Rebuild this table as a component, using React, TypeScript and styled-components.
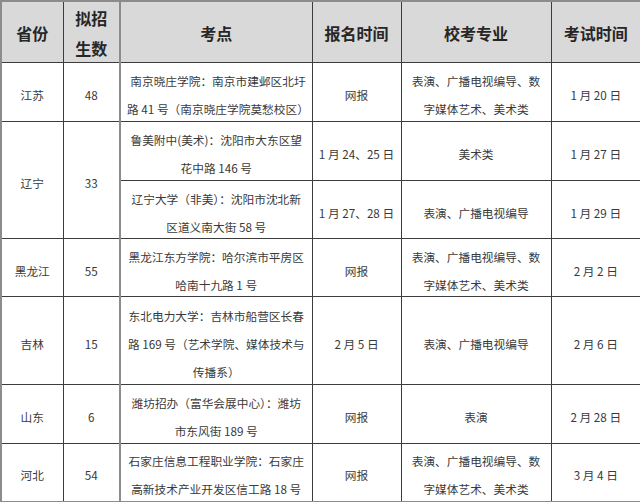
import React from "react";
import styled, { createGlobalStyle } from "styled-components";

const GlobalStyle = createGlobalStyle`
  html, body {
    margin: 0;
    padding: 0;
    background: #ffffff;
  }
  body {
    font-family: "Noto Sans CJK SC", "Liberation Sans", sans-serif;
  }
`;

const Page = styled.div`
  width: 640px;
`;

const Table = styled.table`
  border-collapse: collapse;
  table-layout: fixed;
  width: 640px;
  border: 2px solid #8c8c8c;
  color: #3a3a3a;
`;

const HeadCell = styled.th<{ $thick?: boolean }>`
  background: #d9d9d9;
  height: 58px;
  padding: 0;
  font-size: 16px;
  font-weight: 700;
  line-height: 30px;
  color: #262626;
  text-align: center;
  vertical-align: middle;
  border: 1px solid #3c3c3c;
  border-right: ${(p) => (p.$thick ? "2px solid #8c8c8c" : "1px solid #3c3c3c")};
`;

const Row = styled.tr<{ $h: number }>`
  height: ${(p) => p.$h}px;
`;

const Cell = styled.td<{ $thick?: boolean }>`
  padding: 0 6px;
  font-size: 11.7px;
  line-height: 28px;
  text-align: center;
  vertical-align: middle;
  white-space: nowrap;
  border: 1px solid #3c3c3c;
  border-right: ${(p) => (p.$thick ? "2px solid #8c8c8c" : "1px solid #3c3c3c")};
`;

/* the source font sits lower in its line box than Noto does */
const Text = styled.span<{ $shift?: number }>`
  display: inline-block;
  transform: translateY(${(p) => p.$shift ?? 3}px);
`;

type Site = { place: React.ReactNode; signup: string; major: React.ReactNode; exam: string; h: number };
type Prov = { name: string; count: string; sites: Site[] };

const data: Prov[] = [
  {
    name: "江苏",
    count: "48",
    sites: [
      {
        place: (
          <>
            南京晓庄学院：南京市建邺区北圩
            <br />
            路 41 号（南京晓庄学院莫愁校区）
          </>
        ),
        signup: "网报",
        major: (
          <>
            表演、广播电视编导、数
            <br />
            字媒体艺术、美术类
          </>
        ),
        exam: "1 月 20 日",
        h: 59,
      },
    ],
  },
  {
    name: "辽宁",
    count: "33",
    sites: [
      {
        place: (
          <>
            鲁美附中(美术)：沈阳市大东区望
            <br />
            花中路 146 号
          </>
        ),
        signup: "1 月 24、25 日",
        major: "美术类",
        exam: "1 月 27 日",
        h: 59,
      },
      {
        place: (
          <>
            辽宁大学（非美）：沈阳市沈北新
            <br />
            区道义南大街 58 号
          </>
        ),
        signup: "1 月 27、28 日",
        major: "表演、广播电视编导",
        exam: "1 月 29 日",
        h: 58,
      },
    ],
  },
  {
    name: "黑龙江",
    count: "55",
    sites: [
      {
        place: (
          <>
            黑龙江东方学院：哈尔滨市平房区
            <br />
            哈南十九路 1 号
          </>
        ),
        signup: "网报",
        major: (
          <>
            表演、广播电视编导、数
            <br />
            字媒体艺术、美术类
          </>
        ),
        exam: "2 月 2 日",
        h: 58,
      },
    ],
  },
  {
    name: "吉林",
    count: "15",
    sites: [
      {
        place: (
          <>
            东北电力大学：吉林市船营区长春
            <br />
            路 169 号（艺术学院、媒体技术与
            <br />
            传播系）
          </>
        ),
        signup: "2 月 5 日",
        major: "表演、广播电视编导",
        exam: "2 月 6 日",
        h: 88,
      },
    ],
  },
  {
    name: "山东",
    count: "6",
    sites: [
      {
        place: (
          <>
            潍坊招办（富华会展中心）：潍坊
            <br />
            市东风街 189 号
          </>
        ),
        signup: "网报",
        major: "表演",
        exam: "2 月 28 日",
        h: 59,
      },
    ],
  },
  {
    name: "河北",
    count: "54",
    sites: [
      {
        place: (
          <>
            石家庄信息工程职业学院：石家庄
            <br />
            高新技术产业开发区信工路 18 号
          </>
        ),
        signup: "网报",
        major: (
          <>
            表演、广播电视编导、数
            <br />
            字媒体艺术、美术类
          </>
        ),
        exam: "3 月 4 日",
        h: 58,
      },
    ],
  },
];

export default function App() {
  return (
    <Page>
      <GlobalStyle />
      <Table>
        <colgroup>
          <col style={{ width: 62 }} />
          <col style={{ width: 57 }} />
          <col style={{ width: 192 }} />
          <col style={{ width: 89 }} />
          <col style={{ width: 150 }} />
          <col style={{ width: 90 }} />
        </colgroup>
        <thead>
          <tr>
            <HeadCell>
              <Text $shift={1}>省份</Text>
            </HeadCell>
            <HeadCell $thick>
              <Text $shift={1}>
                拟招
                <br />
                生数
              </Text>
            </HeadCell>
            <HeadCell>
              <Text $shift={1}>考点</Text>
            </HeadCell>
            <HeadCell>
              <Text $shift={1}>报名时间</Text>
            </HeadCell>
            <HeadCell>
              <Text $shift={1}>校考专业</Text>
            </HeadCell>
            <HeadCell>
              <Text $shift={1}>考试时间</Text>
            </HeadCell>
          </tr>
        </thead>
        <tbody>
          {data.map((p) =>
            p.sites.map((s, i) => (
              <Row key={p.name + i} $h={s.h}>
                {i === 0 && (
                  <Cell rowSpan={p.sites.length}>
                    <Text>{p.name}</Text>
                  </Cell>
                )}
                {i === 0 && (
                  <Cell rowSpan={p.sites.length} $thick>
                    <Text>{p.count}</Text>
                  </Cell>
                )}
                <Cell>
                  <Text>{s.place}</Text>
                </Cell>
                <Cell>
                  <Text>{s.signup}</Text>
                </Cell>
                <Cell>
                  <Text>{s.major}</Text>
                </Cell>
                <Cell>
                  <Text>{s.exam}</Text>
                </Cell>
              </Row>
            ))
          )}
        </tbody>
      </Table>
    </Page>
  );
}
